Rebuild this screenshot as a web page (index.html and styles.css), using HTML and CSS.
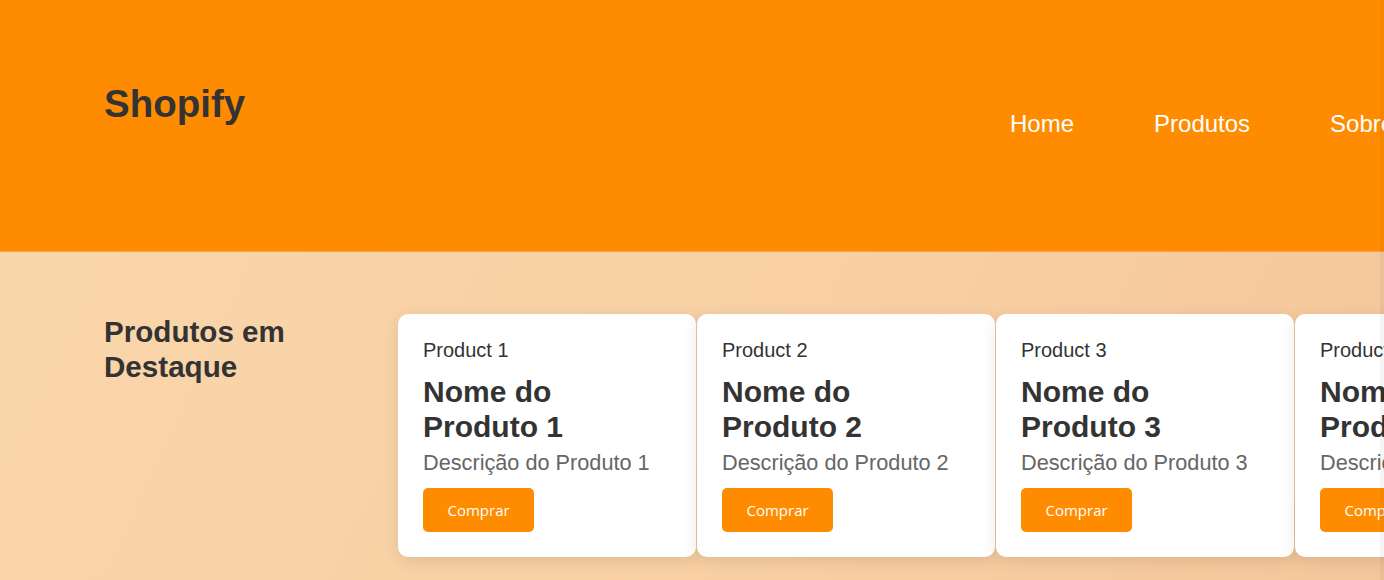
FILE: index.html
```html
<!DOCTYPE html>
<html lang="pt">
<head>
<meta charset="utf-8">
<title>Shopify</title>
<link rel="stylesheet" href="styles.css">
</head>
<body>
<header class="site-header">
  <div class="logo">Shopify</div>
  <nav class="main-nav">
    <ul class="nav-list">
      <li><a class="nav-link" href="#">Home</a></li>
      <li><a class="nav-link" href="#">Produtos</a></li>
      <li><a class="nav-link" href="#">Sobre</a></li>
      <li><a class="nav-link" href="#">Contato</a></li>
    </ul>
  </nav>
</header>
<main class="featured">
  <aside class="featured-side">
    <h2 class="featured-title">Produtos em Destaque</h2>
  </aside>
  <div class="card-row">
    <article class="card">
      <p class="card-label">Product 1</p>
      <h3 class="card-name">Nome do Produto 1</h3>
      <p class="card-desc">Descrição do Produto 1</p>
      <button class="buy-btn">Comprar</button>
    </article>
    <article class="card">
      <p class="card-label">Product 2</p>
      <h3 class="card-name">Nome do Produto 2</h3>
      <p class="card-desc">Descrição do Produto 2</p>
      <button class="buy-btn">Comprar</button>
    </article>
    <article class="card">
      <p class="card-label">Product 3</p>
      <h3 class="card-name">Nome do Produto 3</h3>
      <p class="card-desc">Descrição do Produto 3</p>
      <button class="buy-btn">Comprar</button>
    </article>
    <article class="card">
      <p class="card-label">Product 4</p>
      <h3 class="card-name">Nome do Produto 4</h3>
      <p class="card-desc">Descrição do Produto 4</p>
      <button class="buy-btn">Comprar</button>
    </article>
  </div>
</main>
<div class="edge-shade"></div>
</body>
</html>
```
FILE: styles.css
```css
html, body {
  margin: 0;
  padding: 0;
  overflow: hidden;
  height: 100%;
}

body {
  font-family: "Liberation Sans", Arial, sans-serif;
  color: #333;
  background: linear-gradient(135deg, #f9d6aa 0%, #f4c69a 100%);
}

.site-header {
  display: flex;
  align-items: flex-start;
  height: 252px;
  box-sizing: border-box;
  padding: 82px 0 0 104px;
  background: #ff8c00;
  border-bottom: 1px solid #fba24c;
  white-space: nowrap;
}

.logo {
  flex: 0 0 906px;
  font-size: 38.5px;
  font-weight: bold;
  color: #333;
  line-height: 44px;
}

.main-nav {
  flex: 0 0 auto;
  margin-top: 28px;
}

.nav-list {
  display: flex;
  gap: 80px;
  list-style: none;
  margin: 0;
  padding: 0;
}

.nav-link {
  color: #fff;
  text-decoration: none;
  font-size: 24px;
  line-height: 28px;
}

.featured {
  display: flex;
  align-items: flex-start;
  padding: 62px 0 0 104px;
  min-height: 329px;
  box-sizing: border-box;
  background: linear-gradient(115deg, #f9d6aa 0%, #f8d0a3 55%, #f5c69b 100%);
}

.featured-side {
  flex: 0 0 294px;
}

.featured-title {
  margin: 0;
  width: 260px;
  font-size: 29.6px;
  line-height: 35px;
  font-weight: bold;
  color: #333;
}

.card-row {
  display: flex;
  gap: 1px;
  flex: 0 0 auto;
}

.card {
  flex: 0 0 298px;
  box-sizing: border-box;
  padding: 25px 25px 25px;
  background: #fff;
  border-radius: 10px;
  box-shadow: 0 4px 16px rgba(0, 0, 0, 0.1);
}

.card-label {
  margin: 0;
  font-size: 20px;
  line-height: 23px;
  color: #333;
}

.card-name {
  margin: 12px 0 0;
  font-size: 30px;
  line-height: 35px;
  font-weight: bold;
  color: #333;
}

.card-desc {
  margin: 6px 0 0;
  font-size: 21.7px;
  line-height: 25px;
  color: #666;
  white-space: nowrap;
}

.buy-btn {
  display: block;
  margin-top: 13px;
  padding: 12px 24.5px;
  border: 0;
  border-radius: 5px;
  background: #ff8c00;
  color: #fff;
  font-family: "Open Sans", sans-serif;
  font-size: 15px;
  line-height: 20px;
  cursor: pointer;
}

.edge-shade {
  position: fixed;
  top: 0;
  right: 0;
  width: 4px;
  height: 100%;
  background: rgba(0, 0, 0, 0.04);
}
```
